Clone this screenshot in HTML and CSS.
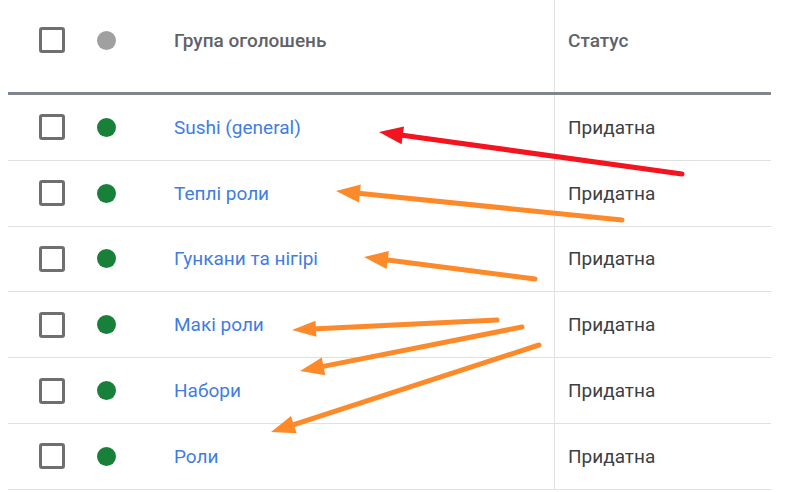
FILE: index.html
```html
<!DOCTYPE html>
<html lang="uk">
<head>
<meta charset="utf-8">
<title>Групи оголошень</title>
<link rel="stylesheet" href="styles.css">
</head>
<body>
<div class="page">
  <div class="table">
    <div class="row head">
      <div class="cell c-check"><span class="checkbox"></span></div>
      <div class="cell c-dot"><span class="dot grey"></span></div>
      <div class="cell c-name">Група оголошень</div>
      <div class="cell c-status">Статус</div>
    </div>
    <div class="row">
      <div class="cell c-check"><span class="checkbox"></span></div>
      <div class="cell c-dot"><span class="dot green"></span></div>
      <div class="cell c-name"><a class="link">Sushi (general)</a></div>
      <div class="cell c-status">Придатна</div>
    </div>
    <div class="row">
      <div class="cell c-check"><span class="checkbox"></span></div>
      <div class="cell c-dot"><span class="dot green"></span></div>
      <div class="cell c-name"><a class="link">Теплі роли</a></div>
      <div class="cell c-status">Придатна</div>
    </div>
    <div class="row">
      <div class="cell c-check"><span class="checkbox"></span></div>
      <div class="cell c-dot"><span class="dot green"></span></div>
      <div class="cell c-name"><a class="link">Гункани та нігірі</a></div>
      <div class="cell c-status">Придатна</div>
    </div>
    <div class="row">
      <div class="cell c-check"><span class="checkbox"></span></div>
      <div class="cell c-dot"><span class="dot green"></span></div>
      <div class="cell c-name"><a class="link">Макі роли</a></div>
      <div class="cell c-status">Придатна</div>
    </div>
    <div class="row">
      <div class="cell c-check"><span class="checkbox"></span></div>
      <div class="cell c-dot"><span class="dot green"></span></div>
      <div class="cell c-name"><a class="link">Набори</a></div>
      <div class="cell c-status">Придатна</div>
    </div>
    <div class="row">
      <div class="cell c-check"><span class="checkbox"></span></div>
      <div class="cell c-dot"><span class="dot green"></span></div>
      <div class="cell c-name"><a class="link">Роли</a></div>
      <div class="cell c-status">Придатна</div>
    </div>
  </div>

  <svg class="arrows" width="788" height="492" viewBox="0 0 788 492" aria-hidden="true">
    <g class="red">
      <line x1="682" y1="174" x2="398.8" y2="134.7"/>
      <polygon points="379,132 404,126.4 401.6,144.2"/>
    </g>
    <g class="orange">
      <line x1="622" y1="220" x2="355.9" y2="193"/>
      <polygon points="336,191 360.8,184.5 359,202.4"/>
      <line x1="535" y1="279" x2="383.8" y2="259.6"/>
      <polygon points="364,257 388.9,251.1 386.7,269"/>
      <line x1="497" y1="320" x2="312" y2="329"/>
      <polygon points="292,330 315.5,320.8 316.4,336.8"/>
      <line x1="522" y1="327" x2="319.6" y2="367.1"/>
      <polygon points="300,371 321.8,357.5 325.3,375.2"/>
      <line x1="539" y1="345" x2="290" y2="425.8"/>
      <polygon points="271,432 291,416 296.6,433.2"/>
    </g>
  </svg>
</div>
</body>
</html>
```

FILE: styles.css
```css
html, body {
  margin: 0;
  padding: 0;
  background: #ffffff;
}

.page {
  position: relative;
  width: 788px;
  height: 492px;
  overflow: hidden;
  font-family: Roboto, "Liberation Sans", Arial, sans-serif;
}

.table {
  margin-left: 8px;
  width: 763px;
  display: flex;
  flex-direction: column;
}

.row {
  display: flex;
  align-items: stretch;
  height: 64.8px;
  border-bottom: 1px solid #e0e0e0;
  font-size: 19px;
  color: #3c4043;
}

.row.head {
  height: 92px;
  border-bottom: 3px solid #80868b;
  color: #5f6368;
  font-weight: 500;
}

.cell {
  display: flex;
  align-items: center;
}

.row.head .cell {
  padding-bottom: 12px;
}

.c-check {
  width: 76px;
  padding-left: 31px;
  box-sizing: border-box;
}

.c-dot {
  width: 76px;
  padding-left: 13px;
  box-sizing: border-box;
}

.c-name {
  width: 394px;
  padding-left: 14px;
  box-sizing: border-box;
}

.c-status {
  flex: 1;
  padding-left: 13px;
  border-left: 1px solid #e0e0e0;
}

.checkbox {
  width: 20px;
  height: 20px;
  border: 3px solid #6f6f6f;
  border-radius: 3px;
  display: block;
}

.dot {
  width: 19px;
  height: 19px;
  border-radius: 50%;
  display: block;
}

.dot.grey {
  background: #a0a0a0;
}

.dot.green {
  background: #188038;
}

.link {
  color: #3f7de0;
  text-decoration: none;
}

.arrows {
  position: absolute;
  left: 0;
  top: 0;
}

.arrows line {
  stroke-width: 5;
  stroke-linecap: round;
}

.arrows .red line {
  stroke: #f2141f;
}

.arrows .red polygon {
  fill: #f2141f;
}

.arrows .orange line {
  stroke: #fd8a2a;
}

.arrows .orange polygon {
  fill: #fd8a2a;
}
```
